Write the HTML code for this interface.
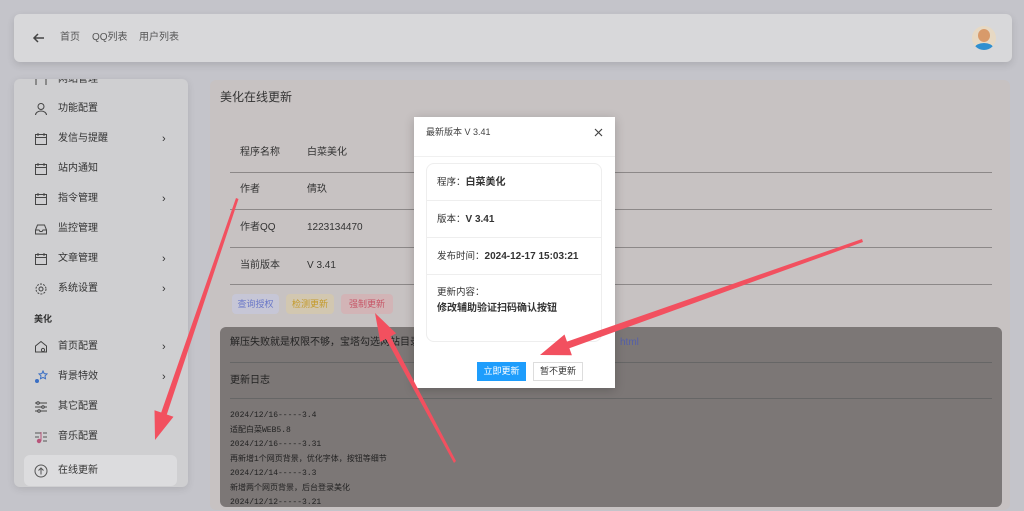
<!DOCTYPE html>
<html><head><meta charset="utf-8"><style>
*{margin:0;padding:0;box-sizing:border-box}
body{width:1024px;height:503px;overflow:hidden;background:#c4c4ca;font-family:"Liberation Sans","Noto Sans CJK SC",sans-serif;position:relative;color:#333;line-height:1.2}
.top{position:absolute;left:14px;top:14px;width:998px;height:48px;background:#d8d8da;border-radius:6px;box-shadow:0 3px 8px rgba(0,0,0,.12)}
.top span{position:absolute;top:18px;font-size:10px;line-height:12px;color:#555}
.side{position:absolute;left:14px;top:79px;width:174px;height:408px;background:#cfcfd1;border-radius:6px;overflow:hidden;box-shadow:0 2px 8px rgba(0,0,0,.1)}
.it{position:absolute;left:0;width:174px;height:30px;font-size:10px;color:#333}
.it .t{position:absolute;left:44px;top:8px;line-height:14px}
.it .ic{position:absolute;left:20px;top:8px;width:14px;height:14px}
.it .ar{position:absolute;left:148px;top:8px;font-size:11px;line-height:14px}
.main{position:absolute;left:210px;top:80px;width:800px;height:430px;background:#c7c2c2;border-radius:6px}
.row{position:absolute;left:20px;width:762px;height:1px;background:#8c8888}
.lbl{position:absolute;font-size:10px;line-height:12px;color:#333}
.log{position:absolute;left:220px;top:327px;width:782px;height:180px;background:#7c7776;border-radius:6px}
.mono{font-family:"Liberation Mono","Noto Sans CJK SC",monospace;font-size:8px;color:#222}
.modal{position:absolute;left:414px;top:117px;width:201px;height:271px;background:#fff;box-shadow:0 2px 10px rgba(0,0,0,.2)}
.box{position:absolute;left:12px;top:46px;width:176px;height:179px;border:1px solid #eee;border-radius:8px}
.box div{position:absolute;left:0;width:174px;border-bottom:1px solid #eee;font-size:9.5px;padding-left:10px}
.box b{font-size:10px}
</style></head><body>
<div class="top">
<svg style="position:absolute;left:18px;top:17px" width="14" height="14" viewBox="0 0 14 14"><path d="M12 7H2M6 3L2 7l4 4" stroke="#444" stroke-width="1.5" fill="none"/></svg>
<span style="left:46px">首页</span><span style="left:78px">QQ列表</span><span style="left:125px">用户列表</span>
<div style="position:absolute;left:958px;top:12px;width:24px;height:24px;border-radius:50%;background:#e7d9c4;overflow:hidden"><div style="position:absolute;left:6px;top:3px;width:12px;height:13px;border-radius:50%;background:#d89a6a"></div><div style="position:absolute;left:3px;top:17px;width:18px;height:9px;border-radius:50% 50% 0 0;background:#2e8fd0"></div></div>
</div>
<div class="side">
<div class="it" style="top:-14px"><svg class="ic" viewBox="0 0 14 14"><path d="M2 12V6a5 5 0 0110 0v6" stroke="#444" fill="none"/></svg><span class="t">网站管理</span></div>
<div class="it" style="top:15px"><svg class="ic" viewBox="0 0 14 14"><circle cx="7" cy="4.5" r="3" stroke="#444" fill="none"/><path d="M1.5 13a5.5 4 0 0111 0" stroke="#444" fill="none"/></svg><span class="t">功能配置</span></div>
<div class="it" style="top:45px"><svg class="ic" viewBox="0 0 14 14"><rect x="1.5" y="2.5" width="11" height="10" stroke="#444" fill="none"/><path d="M1.5 5.5h11M4 1v3M10 1v3" stroke="#444"/></svg><span class="t">发信与提醒</span><span class="ar">›</span></div>
<div class="it" style="top:75px"><svg class="ic" viewBox="0 0 14 14"><rect x="1.5" y="2.5" width="11" height="10" stroke="#444" fill="none"/><path d="M1.5 5.5h11M4 1v3M10 1v3" stroke="#444"/></svg><span class="t">站内通知</span></div>
<div class="it" style="top:105px"><svg class="ic" viewBox="0 0 14 14"><rect x="1.5" y="2.5" width="11" height="10" stroke="#444" fill="none"/><path d="M1.5 5.5h11M4 1v3M10 1v3" stroke="#444"/></svg><span class="t">指令管理</span><span class="ar">›</span></div>
<div class="it" style="top:135px"><svg class="ic" viewBox="0 0 14 14"><path d="M1.5 8l2-5h7l2 5v4h-11zM1.5 8h3.5l1 1.5h2L9 8h3.5" stroke="#444" fill="none"/></svg><span class="t">监控管理</span></div>
<div class="it" style="top:165px"><svg class="ic" viewBox="0 0 14 14"><rect x="1.5" y="2.5" width="11" height="10" stroke="#444" fill="none"/><path d="M1.5 5.5h11M4 1v3M10 1v3" stroke="#444"/></svg><span class="t">文章管理</span><span class="ar">›</span></div>
<div class="it" style="top:195px"><svg class="ic" viewBox="0 0 14 14"><circle cx="7" cy="7" r="2" stroke="#444" fill="none"/><circle cx="7" cy="7" r="5" stroke="#444" stroke-dasharray="2 1.2" fill="none"/></svg><span class="t">系统设置</span><span class="ar">›</span></div>
<div style="position:absolute;left:20px;top:235px;font-size:9px;line-height:11px;font-weight:bold">美化</div>
<div class="it" style="top:253px"><svg class="ic" viewBox="0 0 14 14"><path d="M1.5 12V6L7 1.5 12.5 6v6z" stroke="#444" fill="none"/><circle cx="9" cy="10" r="1.6" stroke="#444" fill="none"/></svg><span class="t">首页配置</span><span class="ar">›</span></div>
<div class="it" style="top:283px"><svg class="ic" viewBox="0 0 14 14"><path d="M9 1l1.2 2.6 2.8.3-2 2 .5 2.8L9 7.4 6.5 8.7 7 5.9 5 3.9l2.8-.3z" stroke="#3a6fc4" fill="none"/><circle cx="3" cy="11" r="2" fill="#3a6fc4"/></svg><span class="t">背景特效</span><span class="ar">›</span></div>
<div class="it" style="top:313px"><svg class="ic" viewBox="0 0 14 14"><path d="M1 3h12M1 7h12M1 11h12" stroke="#444"/><circle cx="4" cy="3" r="1.3" fill="#cfcfd1" stroke="#444"/><circle cx="9" cy="7" r="1.3" fill="#cfcfd1" stroke="#444"/><circle cx="5" cy="11" r="1.3" fill="#cfcfd1" stroke="#444"/></svg><span class="t">其它配置</span></div>
<div class="it" style="top:343px"><svg class="ic" viewBox="0 0 14 14"><path d="M1 3h6M1 7h4M9 3h4M9 7h4M9 11h4" stroke="#555"/><circle cx="5" cy="11" r="2.2" fill="#b8557a"/><path d="M7 11V2" stroke="#b8557a"/></svg><span class="t">音乐配置</span></div>
<div style="position:absolute;left:10px;top:376px;width:153px;height:31px;background:#dcdcde;border-radius:6px"></div>
<div class="it" style="top:377px"><svg class="ic" viewBox="0 0 14 14"><circle cx="7" cy="7" r="6" stroke="#555" fill="none"/><path d="M7 10.5V4M4.5 6.5L7 4l2.5 2.5" stroke="#555" fill="none"/></svg><span class="t">在线更新</span></div>
</div>
<div class="main">
<div style="position:absolute;left:10px;top:10px;font-size:12px;line-height:14px;color:#333">美化在线更新</div>
<span class="lbl" style="left:30px;top:67px">程序名称</span><span class="lbl" style="left:97px;top:67px">白菜美化</span>
<div class="row" style="top:92px"></div>
<span class="lbl" style="left:30px;top:104px">作者</span><span class="lbl" style="left:97px;top:104px">倩玖</span>
<div class="row" style="top:129px"></div>
<span class="lbl" style="left:30px;top:142px">作者QQ</span><span class="lbl" style="left:97px;top:142px">1223134470</span>
<div class="row" style="top:167px"></div>
<span class="lbl" style="left:30px;top:180px">当前版本</span><span class="lbl" style="left:97px;top:180px">V 3.41</span>
<div class="row" style="top:204px"></div>
<div style="position:absolute;left:22px;top:214px;width:47px;height:20px;background:#c6c6d6;border-radius:4px;color:#6a78c8;font-size:9px;text-align:center;line-height:20px">查询授权</div>
<div style="position:absolute;left:76px;top:214px;width:48px;height:20px;background:#d2c7b0;border-radius:4px;color:#c49a2a;font-size:9px;text-align:center;line-height:20px">检测更新</div>
<div style="position:absolute;left:131px;top:214px;width:52px;height:20px;background:#d2b4b6;border-radius:4px;color:#c75566;font-size:9px;text-align:center;line-height:20px">强制更新</div>
</div>
<div class="log">
<div style="position:absolute;left:10px;top:10px;font-size:10px;line-height:12px;color:#222">解压失败就是权限不够，宝塔勾选网站目录</div>
<div style="position:absolute;left:400px;top:10px;font-size:10px;line-height:12px;color:#5560a8">html</div>
<div style="position:absolute;left:10px;top:35px;width:762px;height:1px;background:#666"></div>
<div style="position:absolute;left:10px;top:48px;font-size:10px;line-height:12px;color:#222">更新日志</div>
<div style="position:absolute;left:10px;top:71px;width:762px;height:1px;background:#666"></div>
<div class="mono" style="position:absolute;left:10px;top:82px;line-height:14.5px">2024/12/16-----3.4<br>适配白菜WEB5.8<br>2024/12/16-----3.31<br>再新增1个网页背景，优化字体，按钮等细节<br>2024/12/14-----3.3<br>新增两个网页背景，后台登录美化<br>2024/12/12-----3.21</div>
</div>
<div class="modal">
<div style="position:absolute;left:12px;top:10px;font-size:9px;line-height:11px;color:#444">最新版本 V 3.41</div>
<svg style="position:absolute;left:180px;top:11px" width="9" height="9" viewBox="0 0 9 9"><path d="M1 1l7 7M8 1L1 8" stroke="#444" stroke-width="1.2"/></svg>
<div style="position:absolute;left:0;top:39px;width:201px;height:1px;background:#f0f0f0"></div>
<div class="box">
<div style="top:0;height:37px;line-height:37px">程序：<b>白菜美化</b></div>
<div style="top:37px;height:37px;line-height:37px">版本：<b>V 3.41</b></div>
<div style="top:74px;height:37px;line-height:37px">发布时间：<b>2024-12-17 15:03:21</b></div>
<div style="top:111px;height:66px;border:none;padding-top:10px;line-height:16px">更新内容：<br><b>修改辅助验证扫码确认按钮</b></div>
</div>
<div style="position:absolute;left:63px;top:245px;width:49px;height:19px;background:#1e9dfc;color:#fff;font-size:9px;text-align:center;line-height:19px">立即更新</div>
<div style="position:absolute;left:119px;top:245px;width:50px;height:19px;border:1px solid #ddd;color:#333;font-size:9px;text-align:center;line-height:17px">暂不更新</div>
</div>
<svg style="position:absolute;left:0;top:0" width="1024" height="503">
<g fill="#f2505f">
<polygon points="236,198 238.5,199 166.8,414.5 173.5,416.7 155,440 154.5,410.3 161.2,412.5"/>
<polygon points="456,461 454,463 386,338.9 380.3,342 375,313 396.1,333.4 390.4,336.5"/>
<polygon points="862,239 863,242 569.4,348.2 571.9,355.2 540,355 564.5,334.5 567,341.6"/>
</g>
</svg>
</body></html>
